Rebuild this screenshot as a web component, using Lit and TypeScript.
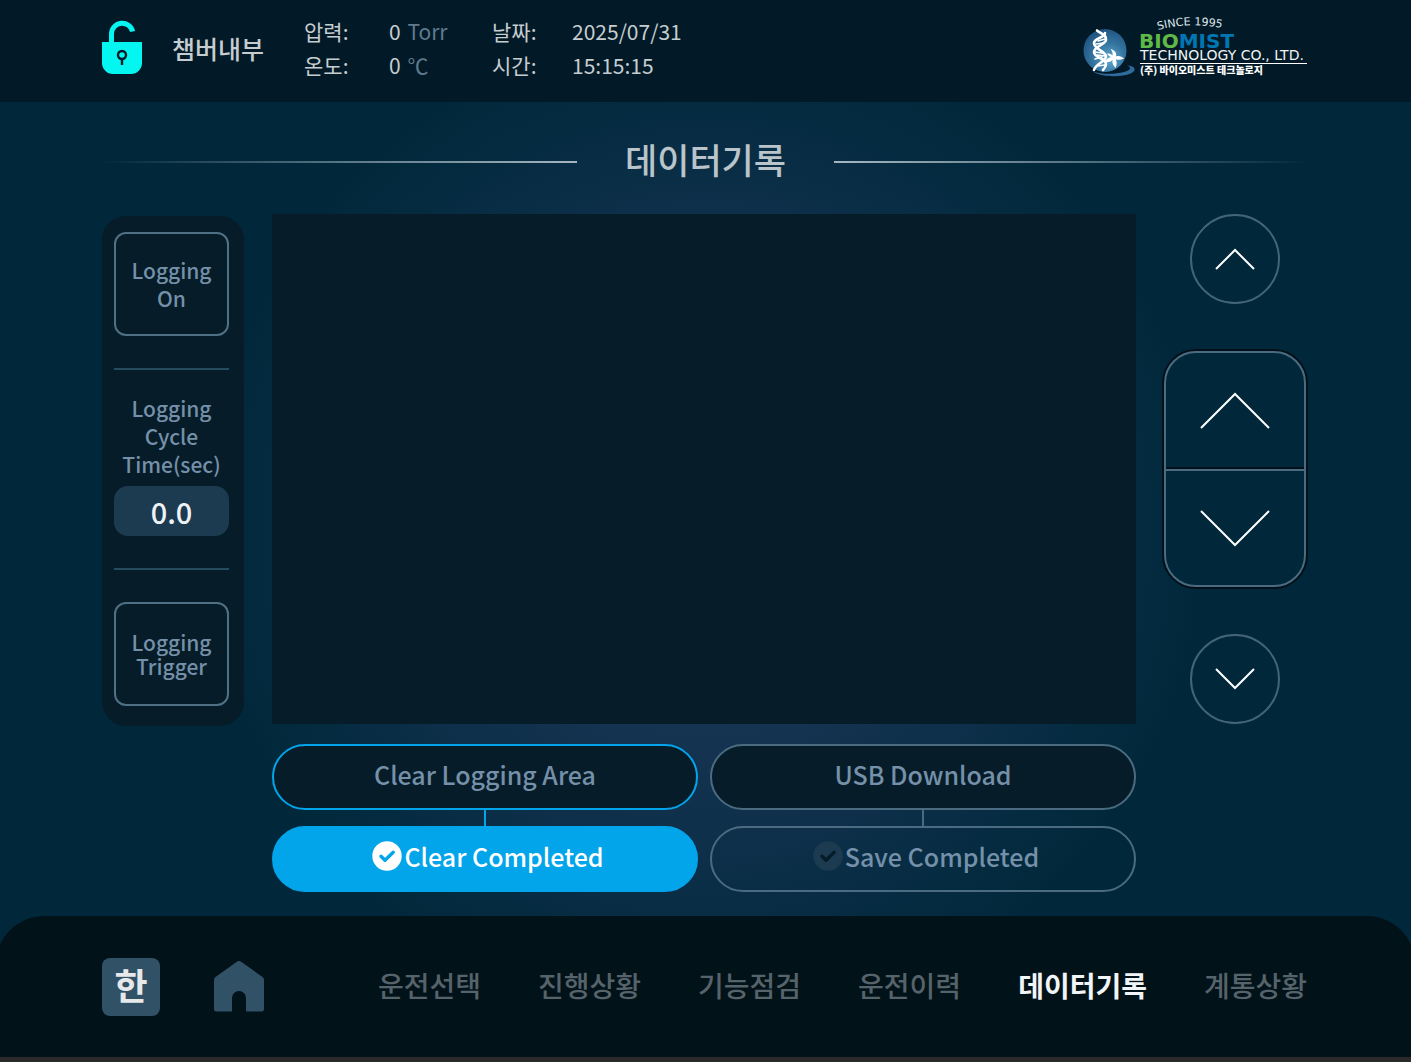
import { LitElement, html, css, svg } from "lit";
import { customElement, state } from "lit/decorators.js";
import { classMap } from "lit/directives/class-map.js";

const checkIcon = html`
  <svg class="check" viewBox="0 0 30 30" aria-hidden="true">
    <circle class="disc" cx="15" cy="15" r="14.7" />
    <path class="tick" d="M9 15.2l4 4 8.2-8" />
  </svg>
`;

const chevron = (points: string, size: string, box: string) => html`
  <svg class="chevron ${size}" viewBox=${box} aria-hidden="true">
    ${svg`<polyline points=${points} />`}
  </svg>
`;

@customElement("biomist-logo")
class BiomistLogo extends LitElement {
  static styles = css`
    :host {
      display: block;
      flex: none;
    }
    svg {
      display: block;
      width: 228px;
      height: 76px;
    }
    .since {
      font: 11px "DejaVu Sans", sans-serif;
      fill: #dfe6ea;
    }
    .brand {
      font: bold 20px "DejaVu Sans", sans-serif;
      fill: #5fb946;
    }
    .brand .mist {
      fill: #0076b3;
    }
    .company {
      font: 14px "DejaVu Sans", sans-serif;
      fill: #eef3f5;
    }
    .korean {
      font: 900 10px "Noto Sans CJK KR", sans-serif;
      fill: #ffffff;
    }
  `;

  render() {
    return html`
      <svg viewBox="0 -6 228 76" role="img" aria-label="Biomist Technology">
        <defs>
          <radialGradient id="globe" cx="0.6" cy="0.7" r="0.75">
            <stop offset="0" stop-color="#5fa9cf" />
            <stop offset="0.5" stop-color="#34749f" />
            <stop offset="1" stop-color="#1e4f7d" />
          </radialGradient>
          <path id="arc" d="M75 14 Q112 4 152 15" />
        </defs>
        <circle cx="22" cy="34.500" r="21.5" fill="url(#globe)" />
        <path
          d="M44 49.500C54 50 54 56 45 58.500C34 61.500 16 60.500 10 55.500C18 58.500 32 58.500 41 56C48 54 49 51.500 44 49.500Z"
          fill="#2d6c9c"
        />
        <g fill="none" stroke="#fff" stroke-linecap="round">
          <path
            stroke-width="2.600"
            d="M14 14.500C18 18 24 19 23 24C22 29 11 30 11 36C11 42 23 42 23 48C23 51 21 53 20 54"
          />
          <path
            stroke-width="2.600"
            d="M22 17C22 22 11 22 11 27C11 33 22 35 23 40C23 46 13 47 11 54"
          />
          <path
            stroke-width="1.500"
            d="M15 25l7-2M13 28l8-1M12 36l7 1M14 39l8 1M12 43l7-2M14 50l8-1"
          />
        </g>
        <path
          d="M29.500 39.500C30 37 29 35 27.500 33C32 34.500 34 37 33 40.500C36 39.500 38.500 40.500 41 42.500C37.500 44 35 44 32.800 43.200C34 46.500 34 49 32.500 52C30 49.500 29 47 29.500 44C27.500 46 25 46.500 21.500 46C23 43 25 41.500 28 41.200C26.500 40.300 25 39.500 24 37.500C26.500 37.500 28 38 29.500 39.500Z"
          fill="#fff"
        />
        <text class="since"><textPath href="#arc">SINCE 1995</textPath></text>
        <text class="brand" x="56" y="32">BIO<tspan class="mist">MIST</tspan></text>
        <text class="company" x="57" y="44">TECHNOLOGY CO., LTD.</text>
        <rect x="57" y="47" width="167" height="1" fill="#fff" />
        <text class="korean" x="57" y="58">(주) 바이오미스트 테크놀로지</text>
      </svg>
    `;
  }
}

@customElement("app-root")
class AppRoot extends LitElement {
  static styles = css`
    :host {
      display: flex;
      flex-direction: column;
      min-height: 100vh;
      overflow: hidden;
      font-family: "Noto Sans CJK KR", sans-serif;
      color: #c6cdd1;
      background: radial-gradient(
          circle at 50% 530px,
          #1b3a5a 0,
          #153452 190px,
          #0d2f49 330px,
          #052b41 420px,
          #01283a 500px
        )
        #01283a;
    }
    * {
      box-sizing: border-box;
    }
    button,
    input {
      font: inherit;
      margin: 0;
      color: inherit;
    }
    button {
      cursor: pointer;
      background: none;
      border: 0;
      padding: 0;
    }
    h1,
    dl,
    dd,
    ul {
      margin: 0;
      padding: 0;
    }

    .top {
      display: flex;
      align-items: center;
      height: 102px;
      padding: 0 100px 6px 102px;
      background: #021a27;
    }
    .lock {
      width: 40px;
      height: 56px;
      margin-right: 30px;
    }
    .lock svg {
      display: block;
      width: 40px;
      height: 56px;
    }
    .room {
      font-size: 25px;
      font-weight: 500;
      margin-right: 40px;
    }
    .readings {
      display: grid;
      grid-template-columns: 85px 103px 80px auto;
      row-gap: 2px;
      font-size: 21px;
      line-height: 32px;
      margin-right: auto;
    }
    .unit {
      color: #5f7a8e;
      margin-left: 2px;
    }

    .heading {
      display: flex;
      align-items: center;
      gap: 48px;
      height: 112px;
      padding: 8px 102px 0;
      flex: none;
    }
    .heading h1 {
      font-size: 35px;
      font-weight: 500;
      line-height: 48px;
      padding-bottom: 6px;
      color: #b9c4cb;
    }
    .rule {
      flex: 1;
      height: 2px;
      background: linear-gradient(to left, #a5b6bf, #587585 50%, transparent);
    }
    .rule.right {
      background: linear-gradient(to right, #a5b6bf, #587585 50%, transparent);
    }

    .workspace {
      flex: 1;
      display: grid;
      grid-template-columns: 142px minmax(0, 1fr) 142px;
      grid-template-rows: 1fr auto;
      gap: 20px 28px;
      padding: 0 105px 24px 102px;
    }
    .settings {
      display: flex;
      flex-direction: column;
      align-self: start;
      margin: 2px 0 -2px;
      padding: 16px 15px 20px 12px;
      border-radius: 24px;
      background: #061c28;
      font-size: 21px;
      font-weight: 500;
      color: #7590a9;
      text-align: center;
    }
    .option {
      height: 104px;
      border: 2px solid #4f7085;
      border-radius: 12px;
      line-height: 28px;
    }
    .option.tight {
      line-height: 24px;
    }
    .divider {
      height: 2px;
      margin: 32px 0;
      background: #254b61;
    }
    .cycle {
      display: block;
      line-height: 28px;
      margin: -8px -8px 8px;
    }
    .value {
      width: 100%;
      height: 50px;
      padding: 0;
      border: 0;
      border-radius: 14px;
      background: #1c3a50;
      color: #edf2f5;
      font-size: 29px;
      text-align: center;
    }
    .log {
      background: #061c28;
    }

    .scroll {
      display: flex;
      flex-direction: column;
      align-items: center;
      justify-content: space-between;
    }
    .round {
      width: 90px;
      height: 90px;
      border: 2px solid #436479;
      border-radius: 50%;
    }
    .rocker {
      width: 100%;
      border: 2px solid #4b6b80;
      border-radius: 32px;
      background: #01283a;
      box-shadow: 0 0 0 2px #021019;
      overflow: hidden;
    }
    .rocker button {
      display: block;
      width: 100%;
      height: 116px;
    }
    .rocker button + button {
      border-top: 2px solid #4b6b80;
      box-shadow: 0 -2px 0 #021019;
    }
    .chevron {
      display: block;
      margin: 0 auto;
      fill: none;
      stroke: #fff;
      stroke-width: 2;
    }
    .chevron.small {
      width: 40px;
      height: 22px;
    }
    .chevron.large {
      width: 70px;
      height: 38px;
    }

    .actions {
      grid-column: 2;
      display: grid;
      grid-template-columns: 1fr 1fr;
      gap: 12px;
      font-size: 25px;
      font-weight: 500;
      line-height: 38px;
      color: #7590a9;
    }
    .task {
      --line: #4b6b80;
      display: flex;
      flex-direction: column;
    }
    .task.active {
      --line: #02a4ea;
    }
    .pill {
      display: flex;
      align-items: center;
      justify-content: center;
      gap: 2px;
      width: 100%;
      height: 66px;
      padding-bottom: 6px;
      border: 2px solid var(--line);
      border-radius: 33px;
    }
    button.pill {
      background: #061c28;
    }
    .link {
      align-self: center;
      width: 2px;
      height: 16px;
      background: var(--line);
    }
    .done {
      padding-left: 6px;
    }
    .active .done {
      background: #02a4ea;
      color: #fff;
    }
    .check {
      width: 30px;
      height: 30px;
    }
    .disc {
      fill: #1c3a50;
    }
    .tick {
      fill: none;
      stroke: #061c28;
      stroke-width: 3.4;
      stroke-linecap: round;
      stroke-linejoin: round;
    }
    .active .disc {
      fill: #fff;
    }
    .active .tick {
      stroke: #02a4ea;
    }

    .bottom {
      display: flex;
      align-items: center;
      gap: 54px;
      height: 141px;
      margin: 0 -4px;
      padding: 0 108px 0 106px;
      border-radius: 48px 48px 0 0;
      background: #021219;
      flex: none;
    }
    .language {
      width: 58px;
      height: 58px;
      border-radius: 8px;
      background: #315167;
      color: #e6e8e9;
      font-size: 36px;
      font-weight: 700;
      line-height: 52px;
      padding-bottom: 6px;
    }
    .home svg {
      display: block;
      width: 50px;
      height: 51px;
    }
    .menu {
      display: flex;
      gap: 57px;
      margin-left: auto;
      padding-bottom: 4px;
      list-style: none;
      font-size: 28px;
      font-weight: 500;
      line-height: 40px;
    }
    .menu a {
      color: #56636b;
      text-decoration: none;
    }
    .menu .current {
      color: #f2f5f7;
      font-weight: 700;
    }
    .edge {
      height: 5px;
      background: #2c292a;
      flex: none;
    }
  `;

  @state() private current = "데이터기록";

  private pages = ["운전선택", "진행상황", "기능점검", "운전이력", "데이터기록", "계통상황"];

  private open(event: Event, page: string) {
    event.preventDefault();
    this.current = page;
  }

  render() {
    return html`
      <header class="top">
        <button class="lock" aria-label="잠금 해제">
          <svg viewBox="0 0 40 56" aria-hidden="true">
            <path
              d="M9.500 25V13.500A10.700 10.700 0 0 1 30.600 11.500"
              fill="none"
              stroke="#04f6f0"
              stroke-width="5"
            />
            <path d="M0 22H40V43a11 11 0 0 1-11 11H11a11 11 0 0 1-11-11Z" fill="#04f6f0" />
            <circle cx="20" cy="35" r="4" fill="none" stroke="#021a27" stroke-width="2.400" />
            <path d="M20 39v6" stroke="#021a27" stroke-width="2.400" />
          </svg>
        </button>
        <span class="room">챔버내부</span>
        <dl class="readings">
          <dt>압력:</dt>
          <dd>0 <span class="unit">Torr</span></dd>
          <dt>날짜:</dt>
          <dd>2025/07/31</dd>
          <dt>온도:</dt>
          <dd>0 <span class="unit">℃</span></dd>
          <dt>시간:</dt>
          <dd>15:15:15</dd>
        </dl>
        <biomist-logo></biomist-logo>
      </header>

      <div class="heading">
        <span class="rule"></span>
        <h1>데이터기록</h1>
        <span class="rule right"></span>
      </div>

      <main class="workspace">
        <section class="settings">
          <button class="option">Logging<br />On</button>
          <div class="divider"></div>
          <label class="cycle" for="cycle">Logging<br />Cycle<br />Time(sec)</label>
          <input class="value" id="cycle" type="text" inputmode="decimal" value="0.0" />
          <div class="divider"></div>
          <button class="option tight">Logging<br />Trigger</button>
        </section>

        <section class="log"></section>

        <nav class="scroll">
          <button class="round" aria-label="맨 위로">
            ${chevron("1,21 20,2 39,21", "small", "0 0 40 22")}
          </button>
          <div class="rocker">
            <button aria-label="위로">${chevron("1,36 35,2 69,36", "large", "0 0 70 38")}</button>
            <button aria-label="아래로">${chevron("1,2 35,36 69,2", "large", "0 0 70 38")}</button>
          </div>
          <button class="round" aria-label="맨 아래로">
            ${chevron("1,1 20,20 39,1", "small", "0 0 40 22")}
          </button>
        </nav>

        <section class="actions">
          <div class="task active">
            <button class="pill">Clear Logging Area</button>
            <span class="link"></span>
            <div class="pill done">${checkIcon}<span>Clear Completed</span></div>
          </div>
          <div class="task">
            <button class="pill">USB Download</button>
            <span class="link"></span>
            <div class="pill done">${checkIcon}<span>Save Completed</span></div>
          </div>
        </section>
      </main>

      <footer class="bottom">
        <button class="language">한</button>
        <button class="home" aria-label="홈">
          <svg viewBox="0 0 50 51" aria-hidden="true">
            <path
              d="M22.500 1a4 4 0 0 1 5 0L48.500 16a3.500 3.500 0 0 1 1.500 3V48a2.500 2.500 0 0 1-2.500 2.500H32V37a7 7 0 0 0-14 0V50.500H2.500A2.500 2.500 0 0 1 0 48V19a3.500 3.500 0 0 1 1.500-3Z"
              fill="#315167"
            />
          </svg>
        </button>
        <ul class="menu">
          ${this.pages.map(
            (page) => html`<li>
              <a
                href="#"
                class=${classMap({ current: page === this.current })}
                @click=${(event: Event) => this.open(event, page)}
                >${page}</a
              >
            </li>`
          )}
        </ul>
      </footer>
      <div class="edge"></div>
    `;
  }
}
